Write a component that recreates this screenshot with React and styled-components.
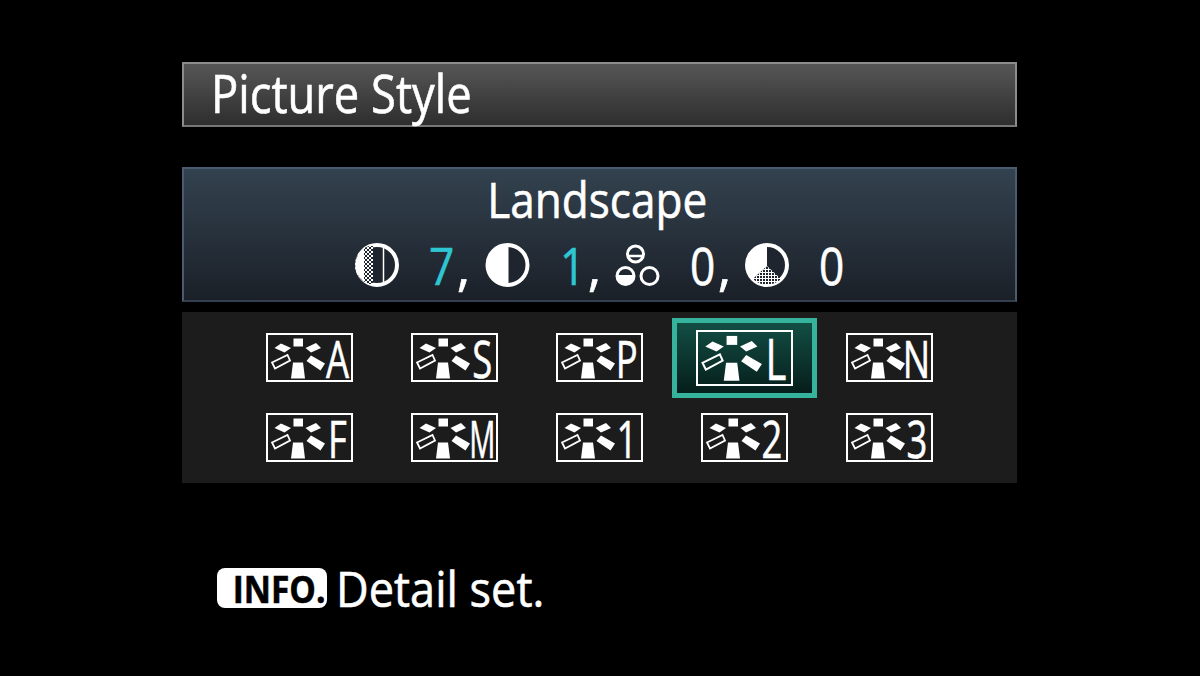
import styled, { createGlobalStyle } from "styled-components";

const GlobalStyle = createGlobalStyle`
  html, body {
    margin: 0;
    background: #000;
  }
  body {
    font-family: "Open Sans", "Noto Sans", sans-serif;
    font-weight: 500;
    color: #fff;
    -webkit-text-stroke: 0.6px currentColor;
  }
`;

const styles = [
  ["A", "S", "P", "L", "N"],
  ["F", "M", "1", "2", "3"],
];

const SceneIcon = ({ width }) => (
  <svg width={width} viewBox="0 0 58 45" fill="#fff" style={{ flexShrink: 0 }}>
    <rect x="25.500" y="3.500" width="9.500" height="8" />
    <polygon points="6.500,13 13,8.500 23,13 16.500,17.500" />
    <polygon points="37.500,13 48,8 53,13 43,17.500" />
    <polygon points="38.500,26 43,20.500 57,28.500 52.500,35.500" />
    <polygon points="4,27.500 19.500,20 22,25.500 7,33.500" fill="none" stroke="#fff" strokeWidth="1.800" />
    <polygon points="25,27.500 35,27.500 37,43.500 23,43.500" />
  </svg>
);

const ToneCurveIcon = () => (
  <svg width="44" height="44" viewBox="0 0 44 44">
    <defs>
      <pattern id="dither" width="4" height="4" patternUnits="userSpaceOnUse">
        <rect width="4" height="4" fill="#1e252e" />
        <rect width="2" height="2" fill="#fff" />
        <rect x="2" y="2" width="2" height="2" fill="#fff" />
      </pattern>
    </defs>
    <circle cx="22" cy="22" r="20" fill="#1e252e" stroke="#fff" strokeWidth="4" />
    <path d="M18 3V41H14A20 20 0 0 1 14 3Z" fill="url(#dither)" />
    <path d="M9 5.500A20 20 0 0 0 9 38.500Z" fill="#fff" />
    <path d="M28.500 3V41" stroke="#fff" strokeWidth="1.500" />
  </svg>
);

const HalfIcon = () => (
  <svg width="45" height="44" viewBox="0 0 44 44">
    <circle cx="22" cy="22" r="20" fill="#1e252e" stroke="#fff" strokeWidth="4" />
    <path d="M23 2A20 20 0 0 0 23 42Z" fill="#fff" />
  </svg>
);

const TrioIcon = () => (
  <svg width="45" height="44" viewBox="0 0 45 44">
    <circle cx="20.500" cy="11" r="8" fill="none" stroke="#fff" strokeWidth="3" />
    <path d="M12 13H29" stroke="#fff" strokeWidth="2.500" />
    <circle cx="10.500" cy="33" r="8.500" fill="none" stroke="#fff" strokeWidth="3" />
    <path d="M1 32H20A9.500 9.500 0 0 1 1 32Z" fill="#fff" />
    <circle cx="34.500" cy="33" r="8.500" fill="none" stroke="#fff" strokeWidth="3" />
  </svg>
);

const PieIcon = () => (
  <svg width="44" height="44" viewBox="0 0 44 44">
    <defs>
      <pattern id="hatch" width="3" height="3" patternUnits="userSpaceOnUse">
        <rect width="3" height="3" fill="#fff" />
        <rect width="2" height="2" fill="#1e252e" />
      </pattern>
    </defs>
    <circle cx="22" cy="22" r="20" fill="#1e252e" stroke="#fff" strokeWidth="4" />
    <path d="M22 2V23L8 36A20 20 0 0 1 22 2Z" fill="#fff" />
    <path d="M22 23L8 36A20 20 0 0 0 36 36Z" fill="url(#hatch)" />
  </svg>
);

const stats = [
  { Icon: ToneCurveIcon, value: "7", active: true, comma: true },
  { Icon: HalfIcon, value: "1", active: true, comma: true },
  { Icon: TrioIcon, value: "0", comma: true },
  { Icon: PieIcon, value: "0" },
];

const App = () => {
  return (
    <>
      <GlobalStyle />
      <Screen>
        <TitleBar>
          <Squeezed $x={0.855}>Picture Style</Squeezed>
        </TitleBar>
        <InfoPanel>
          <StyleName>
            <Squeezed $x={0.9} $origin="center">
              Landscape
            </Squeezed>
          </StyleName>
          <StatRow>
            {stats.map(({ Icon, value, active, comma }, i) => (
              <Stat key={i} $last={!comma}>
                <Icon />
                <StatValue $active={active}>{value}</StatValue>
                {comma && <Comma>,</Comma>}
              </Stat>
            ))}
          </StatRow>
        </InfoPanel>
        <StyleGrid>
          {styles.flat().map((letter) => {
            const selected = letter === "L";
            return (
              <StyleCell key={letter} $selected={selected}>
                <StyleBox $selected={selected}>
                  <SceneIcon width={selected ? 65 : 58} />
                  <StyleLetter $selected={selected}>
                    <Squeezed $x={letter === "M" ? 0.56 : 0.7} $origin="center">
                      {letter}
                    </Squeezed>
                  </StyleLetter>
                </StyleBox>
              </StyleCell>
            );
          })}
        </StyleGrid>
        <Footer>
          <InfoBadge>
            <Squeezed $x={0.88} $origin="right center">
              INFO.
            </Squeezed>
          </InfoBadge>
          <FooterText>
            <Squeezed $x={0.92}>Detail set.</Squeezed>
          </FooterText>
        </Footer>
      </Screen>
    </>
  );
};

const Screen = styled.div`
  width: 835px;
  height: 676px;
  margin-left: 182px;
  padding-top: 62px;
  box-sizing: border-box;
`;

const TitleBar = styled.div`
  height: 65px;
  box-sizing: border-box;
  border: 2px solid #8c8c8c;
  border-bottom-color: #777;
  background: linear-gradient(#565656, #2e2e2e);
  padding-left: 27px;
  font-size: 53px;
  line-height: 58px;
  white-space: nowrap;
`;

const Squeezed = styled.span`
  display: inline-block;
  white-space: nowrap;
  transform-origin: ${(p) => p.$origin || "left center"};
  transform: scaleX(${(p) => p.$x});
`;

const InfoPanel = styled.div`
  height: 135px;
  margin-top: 40px;
  box-sizing: border-box;
  border: 2px solid #4a5b70;
  border-bottom-color: #333f4e;
  background: linear-gradient(#33424f, #1b2028);
  display: flex;
  flex-direction: column;
  align-items: center;
`;

const StyleName = styled.div`
  font-size: 49px;
  line-height: 60px;
  margin-right: 4px;
`;

const StatRow = styled.div`
  display: flex;
  align-self: flex-start;
  margin: 14px 0 0 171px;
`;

const Stat = styled.div`
  width: ${(p) => (p.$last ? "auto" : "130px")};
  display: flex;
  align-items: center;
  height: 44px;
`;

const StatValue = styled.span`
  display: inline-block;
  margin-left: 30px;
  font-size: 52px;
  line-height: 44px;
  color: ${(p) => (p.$active ? "#2ec6d2" : "#fff")};
  transform-origin: left center;
  transform: scaleX(0.85);
`;

const Comma = styled.span`
  font-size: 52px;
  line-height: 44px;
  margin-left: -2px;
`;

const StyleGrid = styled.div`
  height: 171px;
  margin-top: 10px;
  background: #1c1c1c;
  display: grid;
  grid-template-columns: repeat(5, 145px);
  grid-auto-rows: 80px;
  justify-content: center;
  align-content: center;
`;

const StyleCell = styled.div`
  display: flex;
  align-items: center;
  justify-content: center;
  box-sizing: border-box;
  ${(p) =>
    p.$selected &&
    `
    border: 5px solid #35b39c;
    background: linear-gradient(#124e44, #061e1b);
  `}
`;

const StyleBox = styled.div`
  width: ${(p) => (p.$selected ? "97px" : "87px")};
  height: ${(p) => (p.$selected ? "56px" : "49px")};
  box-sizing: border-box;
  border: 2px solid #fff;
  display: flex;
  align-items: center;
`;

const StyleLetter = styled.span`
  flex: 1 0 0;
  min-width: 0;
  display: flex;
  justify-content: center;
  padding-right: 3px;
  font-size: ${(p) => (p.$selected ? "57px" : "52px")};
  line-height: 44px;
`;

const Footer = styled.div`
  display: flex;
  align-items: center;
  margin-top: 85px;
  padding-left: 35px;
`;

const InfoBadge = styled.div`
  width: 110px;
  height: 40px;
  box-sizing: border-box;
  background: #fff;
  border-radius: 8px;
  color: #000;
  font-weight: 700;
  font-size: 38px;
  line-height: 40px;
  display: flex;
  justify-content: flex-end;
  padding-right: 2px;
`;

const FooterText = styled.div`
  margin-left: 9px;
  font-size: 49px;
  line-height: 38px;
`;

export default App;
